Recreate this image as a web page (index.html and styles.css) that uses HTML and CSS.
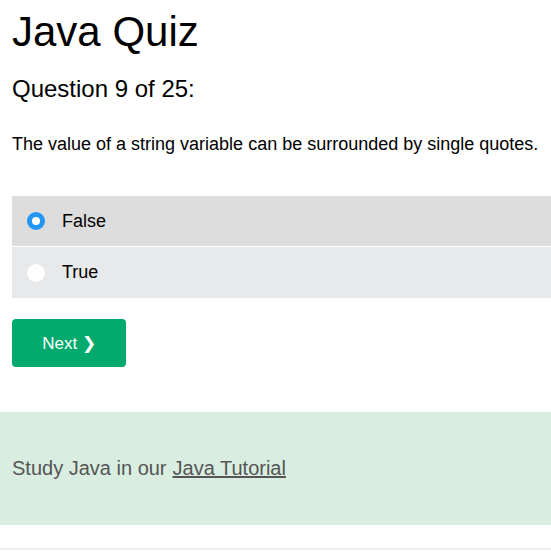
FILE: index.html
```html
<!DOCTYPE html>
<html>
<head>
<meta charset="utf-8">
<link rel="stylesheet" href="styles.css">
</head>
<body>
<div class="page">
  <h1 class="title">Java Quiz</h1>
  <h2 class="qnum">Question 9 of 25:</h2>
  <p class="qtext">The value of a string variable can be surrounded by single quotes.</p>
  <div class="options">
    <label class="opt sel"><span class="radio on"></span><span class="lbl">False</span></label>
    <label class="opt last"><span class="radio"></span><span class="lbl">True</span></label>
  </div>
  <button class="next">Next ❯</button>
</div>
<div class="study">Study Java in our <a href="#" class="link">Java Tutorial</a></div>
<div class="rule"></div>
</body>
</html>
```
FILE: styles.css
```css
html, body { margin: 0; padding: 0; background: #fff; }
body { font-family: "Liberation Sans", Arial, sans-serif; color: #000; overflow: hidden; }
.page { padding-left: 12px; }
.title { font-size: 42px; font-weight: normal; margin: 0; padding-top: 8px; line-height: 48px; }
.qnum { font-size: 24px; font-weight: normal; margin: 0; padding-top: 19px; line-height: 28px; }
.qtext { font-size: 18px; margin: 0; padding-top: 30px; line-height: 22px; }
.options { margin-top: 41px; display: flex; flex-direction: column; gap: 1px; }
.opt { display: flex; align-items: center; height: 50px; background: #e7e9eb; padding-left: 15px; }
.opt.sel { background: #dddddd; }
.opt.last { height: 51px; }
.radio { width: 18px; height: 18px; border-radius: 50%; background: #fff; box-sizing: border-box; }
.radio.on { background: #fff; border: 5px solid #2196f3; }
.lbl { font-size: 18px; margin-left: 17px; }
.next { margin-top: 21px; width: 114px; height: 48px; background: #04aa6d; color: #fff; border: none; border-radius: 4px; font-family: "Liberation Sans", Arial, sans-serif; font-size: 17px; display: block; padding: 0; }
.study { margin-top: 45px; background: #d9eee1; height: 113px; display: flex; align-items: center; padding-left: 12px; font-size: 20px; color: #555; }
.link { color: #555; margin-left: 6px; }
.rule { margin-top: 23px; height: 2px; background: #eeeeee; }
```
